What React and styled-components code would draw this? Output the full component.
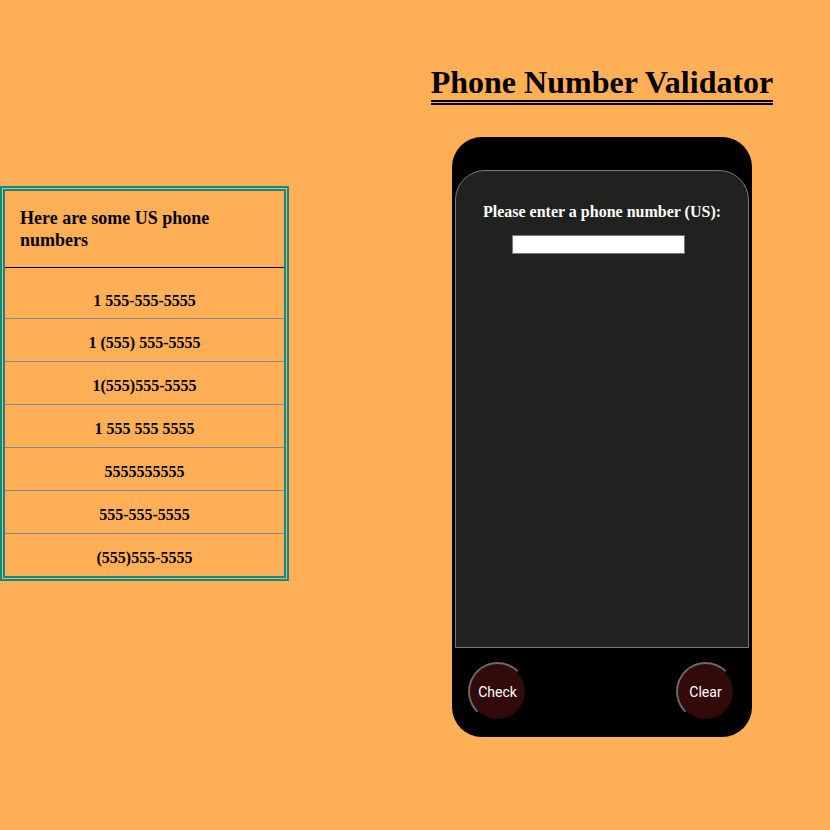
import React from 'react'
import styled, { createGlobalStyle } from 'styled-components'

const GlobalStyle = createGlobalStyle`
html, body {
  margin: 0;
  padding: 0;
  background: #ffb056;
  font-family: "Liberation Serif", "Times New Roman", serif;
}
`

const Page = styled.div`
display: flex;
align-items: flex-start;
width: 830px;
height: 830px;
padding-right: 28px;
box-sizing: border-box;
`

const NumberList = styled.div`
margin-top: 186px;
width: 289px;
border: 5px double #0b8a8a;
box-sizing: border-box;
`

const ListHeader = styled.div`
padding: 16px 15px 16px;
font-size: 18px;
font-weight: bold;
line-height: 22px;
color: #000;
border-bottom: 1px solid #000;
`

const ListRow = styled.div`
height: ${p => (p.$first ? 50 : 43)}px;
padding-top: ${p => (p.$first ? 15 : 6)}px;
box-sizing: border-box;
display: flex;
align-items: center;
justify-content: center;
font-size: 16px;
font-weight: bold;
color: #000;
border-top: ${p => (p.$first ? 'none' : '1px solid #7f8a96')};
`

const RightColumn = styled.div`
margin-left: auto;
width: 400px;
display: flex;
flex-direction: column;
align-items: center;
`

const Title = styled.h1`
margin: 64px 0 0;
font-size: 32px;
line-height: 36px;
font-weight: bold;
color: #000;
border-bottom: 5px double #000;
`

const Phone = styled.div`
margin-top: 32px;
width: 300px;
height: 600px;
background: #000;
border-radius: 30px;
padding: 0 3px;
box-sizing: border-box;
display: flex;
flex-direction: column;
`

const Screen = styled.div`
margin-top: 33px;
height: 478px;
background: #212120;
border: 1px solid #7a7a7a;
border-radius: 30px 30px 0 0;
box-sizing: border-box;
display: flex;
flex-direction: column;
align-items: center;
`

const Prompt = styled.label`
margin-top: 32px;
font-size: 16px;
font-weight: bold;
color: #fff;
`

const NumberInput = styled.input`
margin: 14px 7px 0 0;
width: 173px;
height: 19px;
padding: 0 2px;
box-sizing: border-box;
background: #fff;
border: 1px solid #767676;
outline: none;
`

const Controls = styled.div`
flex: 1;
display: flex;
align-items: center;
justify-content: space-between;
padding: 0 14px 2px 13px;
`

const RoundButton = styled.button`
width: 59px;
height: 59px;
border-radius: 50%;
background: #330a0a;
border: 2px outset #6a6a6a;
border-right-color: #1a0505;
border-bottom-color: #1a0505;
color: #fff;
font-family: Roboto, "Liberation Sans", Arial, sans-serif;
font-size: 14px;
padding: 0;
cursor: pointer;
`

const numbers = [
  '1 555-555-5555',
  '1 (555) 555-5555',
  '1(555)555-5555',
  '1 555 555 5555',
  '5555555555',
  '555-555-5555',
  '(555)555-5555',
]

export default function App() {
  return (
    <>
      <GlobalStyle />
      <Page>
        <NumberList>
          <ListHeader>Here are some US phone numbers</ListHeader>
          {numbers.map((n, i) => (
            <ListRow key={n} $first={i === 0}>{n}</ListRow>
          ))}
        </NumberList>
        <RightColumn>
          <Title>Phone Number Validator</Title>
          <Phone>
            <Screen>
              <Prompt htmlFor="user-input">Please enter a phone number (US):</Prompt>
              <NumberInput id="user-input" type="text" />
            </Screen>
            <Controls>
              <RoundButton>Check</RoundButton>
              <RoundButton>Clear</RoundButton>
            </Controls>
          </Phone>
        </RightColumn>
      </Page>
    </>
  )
}
